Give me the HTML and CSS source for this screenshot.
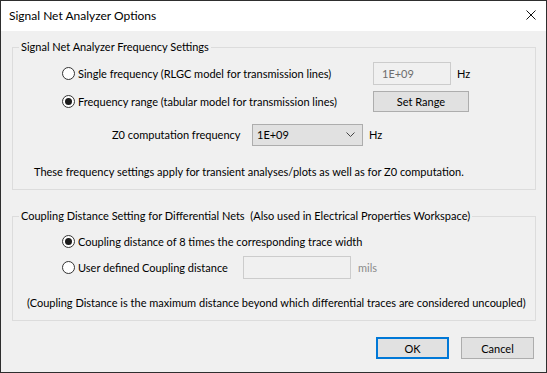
FILE: index.html
```html
<!DOCTYPE html>
<html>
<head>
  <link rel="stylesheet" href="styles.css">
</head>
<body>
  <div class="window">
    <div class="titlebar">
      <span class="title">Signal Net Analyzer Options</span>
      <svg class="close-icon" width="10" height="10" viewBox="0 0 10 10">
        <path d="M0.5 0.5L9.5 9.5M9.5 0.5L0.5 9.5" stroke="#111" stroke-width="1" fill="none"/>
      </svg>
    </div>

    <div class="content">
      <fieldset class="group group-freq">
        <legend>Signal Net Analyzer Frequency Settings</legend>

        <div class="row row-1">
          <label class="radio-label"><span class="radio"></span>Single frequency (RLGC model for transmission lines)</label>
          <span class="textbox textbox-freq">1E+09</span>
          <span class="unit">Hz</span>
        </div>

        <div class="row row-2">
          <label class="radio-label"><span class="radio checked"></span>Frequency range (tabular model for transmission lines)</label>
          <button class="button button-range">Set Range</button>
        </div>

        <div class="row row-3">
          <span class="z0-label">Z0 computation frequency</span>
          <span class="dropdown">
            <span>1E+09</span>
            <svg class="chevron" width="9" height="5" viewBox="0 0 9 5">
              <path d="M0.5 0.5L4.5 4.5L8.5 0.5" stroke="#444" stroke-width="1" fill="none"/>
            </svg>
          </span>
          <span class="unit">Hz</span>
        </div>

        <p class="note note-freq">These frequency settings apply for transient analyses/plots as well as for Z0 computation.</p>
      </fieldset>

      <fieldset class="group group-coupling">
        <legend>Coupling Distance Setting for Differential Nets&nbsp; (Also used in Electrical Properties Workspace)</legend>

        <div class="row row-4">
          <label class="radio-label"><span class="radio checked"></span>Coupling distance of 8 times the corresponding trace width</label>
        </div>

        <div class="row row-5">
          <label class="radio-label radio-user"><span class="radio"></span>User defined Coupling distance</label>
          <span class="textbox textbox-dist"></span>
          <span class="unit unit-disabled">mils</span>
        </div>

        <p class="note note-coupling">(Coupling Distance is the maximum distance beyond which differential traces are considered uncoupled)</p>
      </fieldset>

      <div class="actions">
        <button class="button button-ok">OK</button>
        <button class="button">Cancel</button>
      </div>
    </div>
  </div>
</body>
</html>
```

FILE: styles.css
```css
body {
  margin: 0;
  font-family: Lato, "Noto Sans", sans-serif;
  font-size: 11px;
  color: #000;
  white-space: nowrap;
}

.window {
  width: 547px;
  height: 373px;
  box-sizing: border-box;
  border: 1px solid #2e2e2e;
  background-color: #f0f0f0;
  display: flex;
  flex-direction: column;
}

.titlebar {
  height: 30px;
  flex-shrink: 0;
  background-color: white;
  display: flex;
  align-items: center;
  justify-content: space-between;
  padding: 0 10px 0 8px;
}

.title {
  font-size: 12px;
  margin-top: -1px;
}

.close-icon {
  margin-top: -2px;
}

.content {
  flex: 1;
  padding: 8px 10px 0 11px;
}

.group {
  margin: 0;
  border: 1px solid #dcdcdc;
  padding: 0 0 5px 0;
  min-width: 0;
}

.group legend {
  margin-left: 6px;
  padding: 0 2px;
  line-height: 16px;
}

.row {
  display: flex;
  align-items: center;
}

.row-1,
.row-2 {
  height: 28px;
  padding-left: 49px;
}

.row-1 {
  margin-top: 4px;
}

.row-3 {
  height: 29px;
  margin-top: 5px;
  padding-left: 99px;
}

.radio-label {
  display: flex;
  align-items: center;
  width: 311px;
}

.radio {
  width: 13px;
  height: 13px;
  flex-shrink: 0;
  box-sizing: border-box;
  border: 1px solid #333;
  border-radius: 50%;
  background-color: white;
  margin-right: 3px;
  display: flex;
  align-items: center;
  justify-content: center;
}

.radio.checked::after {
  content: "";
  width: 7px;
  height: 7px;
  border-radius: 50%;
  background-color: #1b1b1b;
}

.textbox {
  box-sizing: border-box;
  height: 23px;
  border: 1px solid #cccccc;
  background-color: #f0f0f0;
  color: #6d6d6d;
  padding: 4px 0 0 8px;
}

.textbox-freq {
  width: 78px;
}

.unit {
  margin-left: 6px;
}

.unit-disabled {
  margin-left: 7px;
  color: #8a8a8a;
}

.button {
  box-sizing: border-box;
  height: 21px;
  border: 1px solid #adadad;
  background-color: #e1e1e1;
  font-family: inherit;
  font-size: 11px;
  color: #000;
  padding: 0;
}

.button-range {
  width: 96px;
}

.z0-label {
  width: 140px;
}

.dropdown {
  box-sizing: border-box;
  width: 111px;
  height: 22px;
  border: 1px solid #adadad;
  background-color: #e1e1e1;
  display: flex;
  align-items: center;
  justify-content: space-between;
  padding: 0 7px 0 4px;
}

.note {
  margin: 0;
  height: 24px;
  line-height: 24px;
}

.note-freq {
  margin-top: 11px;
  padding-left: 21px;
}

.group-coupling {
  margin-top: 18px;
}

.row-4 {
  height: 28px;
  margin-top: 3px;
  padding-left: 49px;
}

.row-4 .radio-label {
  width: auto;
}

.row-5 {
  height: 24px;
  padding-left: 49px;
}

.radio-user {
  width: 181px;
}

.textbox-dist {
  width: 108px;
}

.note-coupling {
  margin-top: 12px;
  padding-left: 14px;
}

.actions {
  display: flex;
  justify-content: flex-end;
  gap: 12px;
  margin-top: 16px;
  padding-right: 2px;
}

.actions .button {
  width: 73px;
  height: 22px;
}

.button-ok {
  border: 2px solid #0078d7;
}
```
